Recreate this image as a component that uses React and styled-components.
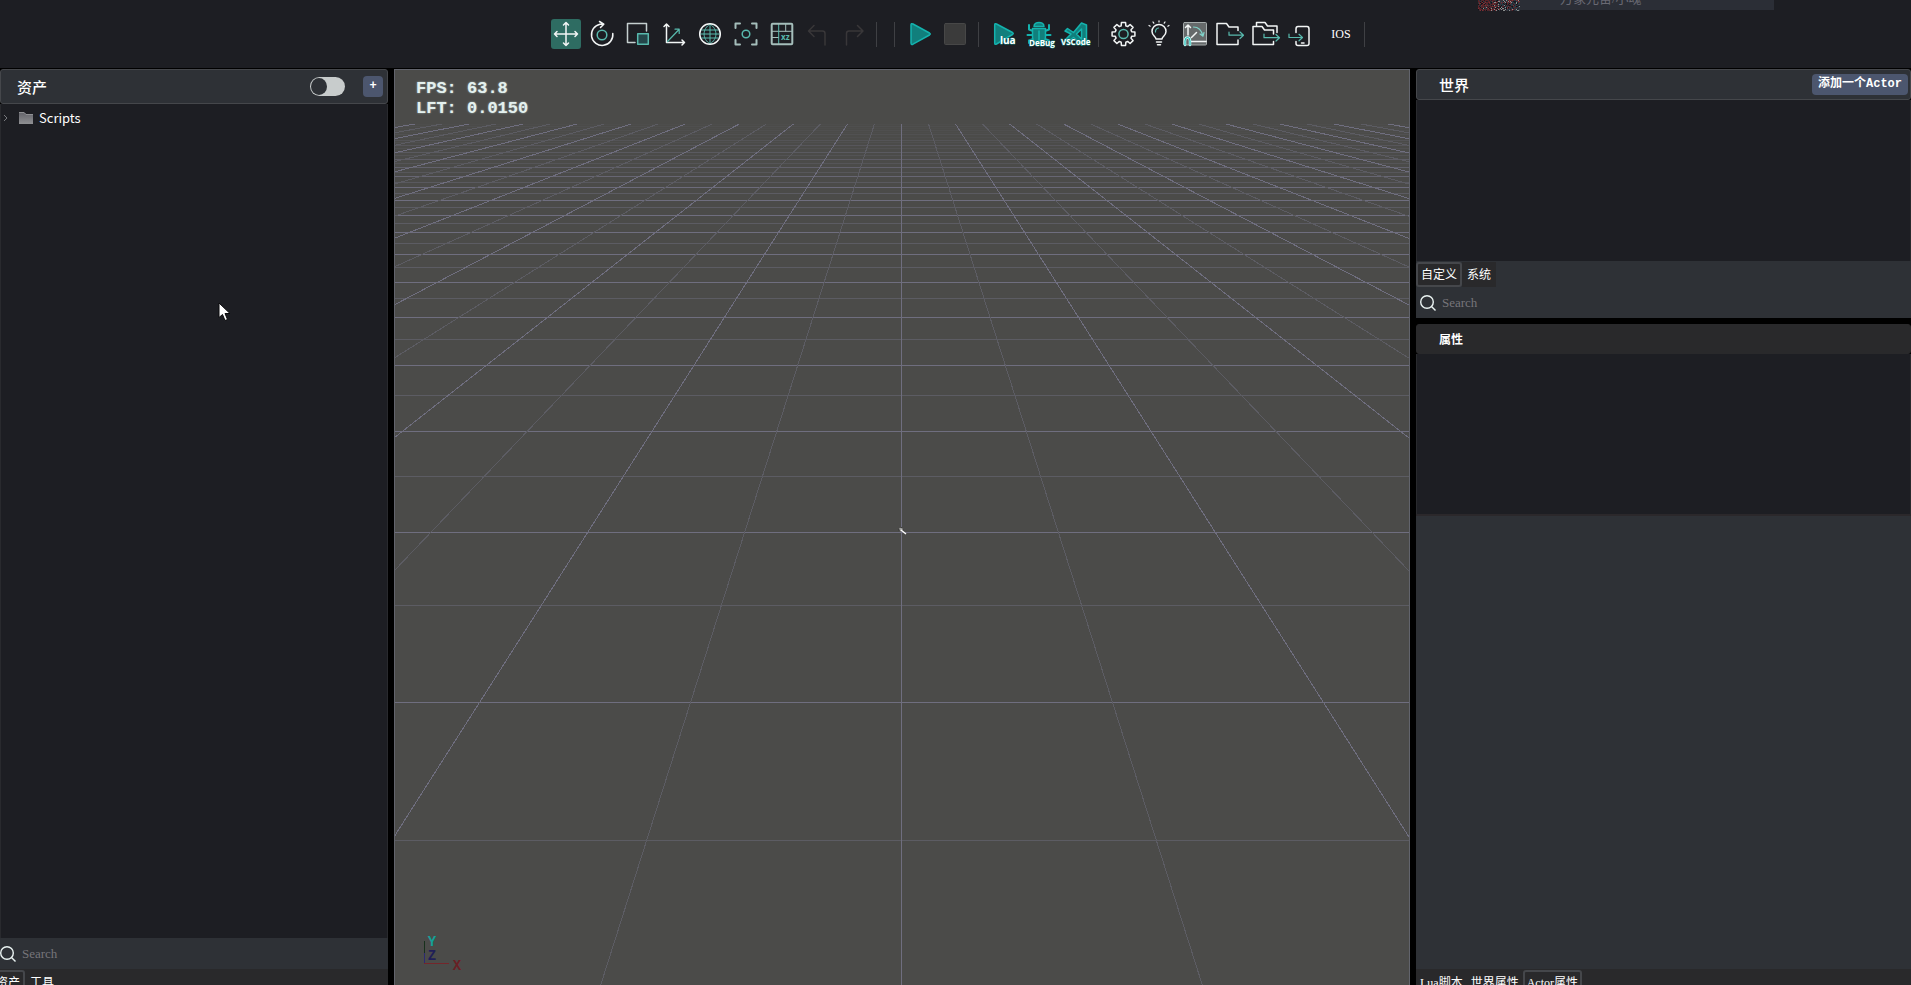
import { useState } from "react";
import styled, { createGlobalStyle, css } from "styled-components";

const GlobalStyle = createGlobalStyle`
  * {
    box-sizing: border-box;
  }

  body {
    margin: 0;
    background: #000;
    color: #fff;
    font-family: "Liberation Serif", "Noto Sans CJK SC", serif;
    font-size: 12px;
    overflow: hidden;
  }

  button,
  input {
    font: inherit;
    color: inherit;
  }
`;

const Page = styled.div`
  height: 100vh;
  display: flex;
  flex-direction: column;
  gap: 1px;
`;

const Toolbar = styled.header`
  position: relative;
  flex: 0 0 68px;
  display: flex;
  align-items: center;
  justify-content: center;
  padding-right: 6px;
  background: #1d1e23;
`;

const ToolGroup = styled.div`
  display: flex;
  align-items: center;
  gap: 6px;
  min-height: 25px;
  padding: 0 7px 0 10px;
  position: relative;

  &::after {
    content: "";
    position: absolute;
    right: -1px;
    top: 50%;
    width: 1px;
    height: 25px;
    margin-top: -12px;
    background: #3f4044;
  }

  & + & {
    margin-left: 1px;
  }
`;

const ToolButton = styled.button`
  width: ${(props) => (props.$wide ? 32 : 30)}px;
  height: 30px;
  padding: 0;
  border: 0;
  border-radius: 3px;
  background: ${(props) => (props.$active ? "#2e6c62" : "transparent")};
  text-align: center;

  svg {
    display: block;
    overflow: visible;
  }
`;

const UserCard = styled.div`
  position: absolute;
  top: 0;
  right: 137px;
  display: flex;
  width: 296px;
  height: 11px;
  overflow: hidden;
`;

const UserName = styled.div`
  flex: 1;
  height: 10px;
  padding-left: 40px;
  display: flex;
  align-items: flex-end;
  background: #2b2e36;
  color: #696973;
  font-size: 13px;
  line-height: 16px;
  padding-bottom: 3px;
`;

const Workspace = styled.main`
  flex: 1;
  min-height: 0;
  display: grid;
  grid-template-columns: 388px 1fr 495px;
  gap: 6px;
`;

const Column = styled.section`
  min-width: 0;
  min-height: 0;
  display: flex;
  flex-direction: column;
`;

const PanelHeader = styled.div`
  flex: 0 0 ${(props) => props.$height}px;
  display: flex;
  align-items: center;
  gap: 18px;
  padding: 0 ${(props) => (props.$tight ? 2 : 4)}px 0 ${(props) => props.$indent}px;
  border: 1px solid #45474b;
  border-radius: 3px;
  background: #2e3136;

  ${(props) =>
    props.$dark &&
    css`
      border-color: #29292b;
      background: #29292b;
    `}
`;

const PanelTitle = styled.h2`
  flex: 1;
  margin: 0;
  padding-top: 2px;
  font-size: ${(props) => (props.$small ? 12 : 15)}px;
  font-weight: ${(props) => (props.$small ? 700 : 500)};
  line-height: 20px;
`;

const PanelBody = styled.div`
  flex: ${(props) => (props.$height ? `0 0 ${props.$height}px` : "1")};
  min-height: 0;
  border-left: 1px solid #292a2e;
  border-right: 1px solid #292a2e;
  background: #1d1e23;
`;

const EmptyBody = styled.div`
  flex: 1;
  border-top: 2px solid #2b282b;
  background: #2e3136;
`;

const Switch = styled.input`
  appearance: none;
  width: 35px;
  height: 19px;
  margin: 0;
  padding: 1px;
  border-radius: 10px;
  background: #c8cccc;

  &::before {
    content: "";
    display: block;
    width: 16px;
    height: 17px;
    border-radius: 50%;
    background: #2e3136;
  }

  &:checked::before {
    margin-left: auto;
  }
`;

const ActionButton = styled.button`
  height: 21px;
  min-width: 20px;
  padding: 0 6px;
  border: 0;
  border-radius: 4px;
  background: #4c566e;
  font-family: "Liberation Mono", "Noto Sans CJK SC", monospace;
  font-weight: 700;
  line-height: 21px;
  white-space: nowrap;
`;

const TreeRow = styled.div`
  display: flex;
  align-items: center;
  height: 24px;
  margin-top: 2px;
  padding-left: 2px;
  font-family: "Noto Sans CJK SC", "Noto Sans", sans-serif;
  font-size: 13px;
  line-height: 20px;

  svg:first-child {
    margin-right: 10px;
  }

  svg + svg {
    margin-right: 6px;
  }
`;

const SearchBar = styled.label`
  flex: 0 0 31px;
  display: flex;
  align-items: center;
  gap: 6px;
  padding-left: ${(props) => props.$indent}px;
  background: #2e3136;
`;

const SearchInput = styled.input`
  flex: 1;
  min-width: 0;
  padding: 0;
  border: 0;
  outline: 0;
  background: transparent;
  font-size: 13px;

  &::placeholder {
    color: #77757a;
    opacity: 1;
  }
`;

const TabBar = styled.div`
  flex: 0 0 ${(props) => (props.$clipped ? 16 : 26)}px;
  display: flex;
  align-items: flex-start;
  overflow: hidden;
  padding-top: 1px;
  background: ${(props) => (props.$clipped ? "#29292b" : "#2e3136")};
`;

const Tab = styled.button`
  height: 25px;
  padding: 0 ${(props) => (props.$dense ? 2 : 3)}px;
  border: 2px solid ${(props) => (props.$active ? "#45474b" : "#29292b")};
  border-radius: ${(props) => (props.$active ? 3 : 0)}px;
  background: #29292b;
  line-height: 20px;
  white-space: nowrap;

  ${(props) =>
    props.$cut &&
    css`
      margin-left: -9px;
    `}
`;

const World = styled.div`
  display: flex;
  flex-direction: column;
  margin-bottom: 6px;
`;

const Viewport = styled.section`
  position: relative;
  min-width: 0;
  min-height: 0;
  border: 1px solid #62646c;
  border-bottom: 0;
  background: #4b4b49;
  overflow: hidden;
`;

const Scene = styled.svg`
  display: block;
  width: 100%;
  height: 100%;
`;

const Stats = styled.pre`
  position: absolute;
  top: 9px;
  left: 21px;
  margin: 0;
  color: #e4f1ef;
  font-family: "Liberation Mono", monospace;
  font-size: 17px;
  font-weight: 700;
  line-height: 20px;
  text-shadow: 0 0 2px #a9bcba;
`;

const Pointer = styled.svg`
  position: absolute;
  top: 302px;
  left: 218px;
  pointer-events: none;
`;

const TEAL = "#58b9ad";
const CYAN = "#14b3ae";
const DEEP = "#117f7c";

const Icon = ({ children, color = "#f2f5f5" }) => (
  <svg
    width="30"
    height="30"
    viewBox="0 0 30 30"
    fill="none"
    stroke={color}
    strokeWidth="1.5"
    strokeLinecap="round"
    strokeLinejoin="round"
  >
    {children}
  </svg>
);

const IconLabel = ({ x, y, children, size = 8 }) => (
  <text
    x={x}
    y={y}
    fill="#fff"
    stroke={DEEP}
    strokeWidth="1"
    paintOrder="stroke"
    fontFamily="Open Sans, sans-serif"
    fontSize={size}
    fontWeight="700"
  >
    {children}
  </text>
);

const gearPath = () => {
  const points = [];
  for (let i = 0; i < 8; i++) {
    const a = (i * Math.PI) / 4;
    [
      [-0.28, 8.5],
      [-0.18, 11.6],
      [0.18, 11.6],
      [0.28, 8.5],
    ].forEach(([d, r]) => {
      points.push(
        `${(14.5 + r * Math.sin(a + d)).toFixed(2)} ${(15 - r * Math.cos(a + d)).toFixed(2)}`
      );
    });
  }
  return `M${points.join("L")}Z`;
};

const groups = [
  [
    {
      name: "Move",
      active: true,
      icon: (
        <Icon>
          <path d="M15 3.5V26.5M3.5 15H26.5M12.5 6L15 3.5L17.5 6M12.5 24L15 26.5L17.5 24M6 12.5L3.5 15L6 17.5M24 12.5L26.5 15L24 17.5" />
        </Icon>
      ),
    },
    {
      name: "Rotate",
      icon: (
        <Icon>
          <path d="M16.5 5.2H13A10.7 10.7 0 1 0 25.8 14.5M12.5 2.5L16.8 5.2L13.5 8.5" />
          <circle cx="15" cy="16" r="4.8" stroke={TEAL} />
        </Icon>
      ),
    },
    {
      name: "Scale",
      icon: (
        <Icon>
          <path d="M12 23.5H4.5V4.5H23.5V12" stroke="#c5cfcf" />
          <rect x="14.7" y="14.7" width="10.6" height="10.6" stroke={TEAL} fill="#24464a" />
        </Icon>
      ),
    },
    {
      name: "Axis",
      icon: (
        <Icon>
          <path d="M7.5 5V23.5H25.5M5 7.5L7.5 5L10 7.5M23 21L25.5 23.5L23 26" />
          <path d="M8.5 22.5L20 10.5M16 10.2H20.2V14.5" stroke={TEAL} strokeWidth="1.2" />
        </Icon>
      ),
    },
    {
      name: "World space",
      icon: (
        <Icon>
          <path
            d="M15 5V25M5 15H25M6.5 11H23.5M6.5 19H23.5M15 5C7 10 7 20 15 25M15 5C23 10 23 20 15 25"
            stroke={TEAL}
            strokeWidth="1"
          />
          <circle cx="15" cy="15" r="10.3" />
        </Icon>
      ),
    },
    {
      name: "Focus",
      icon: (
        <Icon color="#a5bebb">
          <path d="M4.5 9V4.5H9M21 4.5H25.5V9M25.5 21V25.5H21M9 25.5H4.5V21" strokeWidth="2" />
          <circle cx="15" cy="15" r="3.8" stroke={TEAL} />
        </Icon>
      ),
    },
    {
      name: "Snap grid",
      icon: (
        <Icon color="#a5bebb">
          <path d="M5 12.3H25M18.7 5V12M5 18.5H11.5" strokeWidth="1" />
          <path d="M11.7 5V25" stroke={TEAL} strokeWidth="1" />
          <rect x="4.7" y="4.7" width="20.6" height="20.6" rx="1" strokeWidth="2" />
          <text x="14" y="20.5" fill={TEAL} stroke="none" fontSize="8" fontFamily="Open Sans, sans-serif" fontWeight="700">
            xz
          </text>
        </Icon>
      ),
    },
    {
      name: "Undo",
      icon: (
        <Icon color="#393739">
          <path d="M22 26V14.5Q22 12 19.5 12H6M11 6.5L5.5 12L11 17.5" />
        </Icon>
      ),
    },
    {
      name: "Redo",
      icon: (
        <Icon color="#393739">
          <path d="M7.5 26V14.5Q7.5 12 10 12H23.5M18.5 6.5L24 12L18.5 17.5" />
        </Icon>
      ),
    },
  ],
  [],
  [
    {
      name: "Play",
      icon: (
        <Icon color={CYAN}>
          <path d="M6 6Q6 4 8 5L24.5 14Q26 15 24.5 16L8 25.2Q6 26 6 24Z" fill={DEEP} />
        </Icon>
      ),
    },
    {
      name: "Stop",
      icon: (
        <Icon color="#474747">
          <rect x="3.5" y="4.5" width="21" height="21" rx="1" fill="#3b3b3b" strokeWidth="1" />
        </Icon>
      ),
    },
  ],
  [
    {
      name: "Run Lua",
      icon: (
        <Icon color={CYAN}>
          <path d="M5.7 6Q5.7 4 7.5 5L23.5 13.5Q25 14.5 23.5 15.5L7.5 25Q5.7 26 5.7 24Z" fill={DEEP} />
          <IconLabel x="11" y="25" size={10}>
            lua
          </IconLabel>
        </Icon>
      ),
    },
    {
      name: "Debug",
      icon: (
        <Icon color={CYAN}>
          <path d="M8 12L4 10.5V6M20 12L24 10.5V6M7 16H2.5M21 16H25.5M8 20L4 21.5V24M20 20L24 21.5V24" strokeWidth="2" />
          <path d="M9 7.5C9 2 19 2 19 7.5Z" fill={DEEP} />
          <path d="M7.5 9.5H20.5V18C20.5 28 7.5 28 7.5 18Z" fill={DEEP} />
          <path d="M14 12V23" />
          <IconLabel x="4" y="27">
            DeBug
          </IconLabel>
        </Icon>
      ),
    },
    {
      name: "Open VSCode",
      icon: (
        <Icon color={CYAN}>
          <path
            d="M20.5 4L25.5 6V24L20.5 26L12.5 18.5L7 22.5L4 21L10 15L4 12L6.5 9.5L12.5 13.5ZM20.5 10L15.5 15L20.5 20Z"
            fill={DEEP}
            fillRule="evenodd"
          />
          <IconLabel x="0" y="26">
            VSCode
          </IconLabel>
        </Icon>
      ),
    },
  ],
  [
    {
      name: "Settings",
      icon: (
        <Icon>
          <path d={gearPath()} />
          <circle cx="14.5" cy="15" r="4.6" stroke={TEAL} />
        </Icon>
      ),
    },
    {
      name: "Light",
      icon: (
        <Icon>
          <path d="M11 20C11 17.5 7 16.5 7 12.5A7 7 0 0 1 21 12.5C21 16.5 17 17.5 17 20ZM11.5 23H16.5M12.5 25.8H15.5" />
          <path d="M14 1.8V3M8 3L8.8 4.2M20 3L19.2 4.2M4 6.5L5.2 7.2M24 6.5L22.8 7.2" strokeWidth="1.2" />
          <path d="M10.5 13A3.5 3.5 0 0 1 13.5 9" stroke={TEAL} strokeWidth="1.2" />
        </Icon>
      ),
    },
    {
      name: "Terrain",
      icon: (
        <Icon>
          <rect x="2.5" y="3.5" width="23" height="22.5" rx="1" fill="#666a6b" stroke="#a6acac" strokeWidth="1" />
          <path d="M7 16V6M4.5 8.5L7 6L9.5 8.5M10.5 18.5L15.5 13.5M10 22.5H25" />
          <path d="M12.5 8C17 8 20.5 11 22 17M19 15L22 17.2L23 13.5" stroke="#7fd3ca" strokeWidth="1.2" />
          <path d="M4 26V22Q4 18.5 6.5 18.5T9 22V26" stroke="#c9fffa" strokeWidth="2.5" />
          <path d="M4 26V22Q4 18.5 6.5 18.5T9 22V26" stroke={CYAN} strokeWidth="1" />
        </Icon>
      ),
    },
    {
      name: "Export",
      icon: (
        <Icon>
          <path d="M21 11.5V8H12L9.5 4.5H0V25.5H21V21" />
          <path d="M12 13V16.2H26.5M23 13L26.5 16.2L23 19.5" stroke={TEAL} strokeWidth="1.2" />
        </Icon>
      ),
    },
    {
      name: "Export all",
      icon: (
        <Icon>
          <path d="M20.5 15V11H11.5L9 7.5H0V25.5H20.5V22.5M3.5 7V3.5H12L14.5 7H24V13.5" />
          <path d="M11 15V18.7H26.5M23 15.5L26.5 18.7L23 22" stroke={TEAL} strokeWidth="1.2" />
        </Icon>
      ),
    },
    {
      name: "Send to phone",
      icon: (
        <Icon>
          <path d="M7 13.5V10Q7 7.5 9 7.5H18Q20 7.5 20 10V24.5Q20 26.5 18 26.5H9Q7 26.5 7 24.5V22.5M12.5 24H15" />
          <path d="M0 15V18.5H13.5M10 15.3L13.5 18.5L10 21.8" stroke={TEAL} strokeWidth="1.2" />
        </Icon>
      ),
    },
    { name: "IOS", wide: true, icon: "IOS" },
  ],
];

const SearchIcon = () => (
  <svg width="16" height="16" viewBox="0 0 16 16" fill="none" stroke="#eaf3f2" strokeWidth="1.4">
    <circle cx="7" cy="7" r="6.3" />
    <path d="M11.5 11.5L15.5 15.5" />
  </svg>
);

// speckled avatar thumbnail
const Avatar = () => {
  const colors = ["#1a1b22", "#5a2328", "#23242c", "#7a3136", "#111216", "#3b3036", "#8b8f8f", "#2c3a44"];
  const dots = [];
  let seed = 7;
  for (let y = 0; y < 11; y++) {
    for (let x = 0; x < 42; x++) {
      seed = (seed * 16807) % 2147483647;
      const n = seed % 12;
      const color = n > 7 ? colors[x < 20 ? 1 : 7] : colors[n];
      dots.push(<rect key={`${x}-${y}`} x={x} y={y} width="1" height="1" fill={color} />);
    }
  }
  return (
    <svg width="42" height="11" viewBox="0 0 42 11" shapeRendering="crispEdges">
      {dots}
    </svg>
  );
};

const HORIZON = 39;
const CENTER = 901.5;

// ground plane, every second line is a major one
const Ground = () => {
  const rows = Array.from({ length: 41 }, (_, i) => ({
    major: i % 2 === 1,
    y: Math.floor(37.8 + 1934 / (2.408 + i * 0.5)) + 0.5,
  })).filter(({ y }) => y > 124);
  const cols = Array.from({ length: 39 }, (_, i) => i - 19);
  const stroke = (major) => (major ? "#6f6e7f" : "#5c5c63");

  return (
    <g shapeRendering="crispEdges" strokeWidth="1">
      {rows.map(({ major, y }, i) => (
        <path
          key={i}
          d={`M-600 ${y}H2500`}
          stroke={stroke(major)}
          opacity={Math.max(0.12, Math.min(1, (y - 122) / 70))}
        />
      ))}
      {cols.map((k) => (
        <path
          key={k}
          d={`M${CENTER + k * 0.318 * (124 - HORIZON)} 124L${CENTER + k * 0.318 * (1400 - HORIZON)} 1400`}
          stroke={stroke(k % 2 === 0)}
        />
      ))}
    </g>
  );
};

function App() {
  const [flat, setFlat] = useState(false);
  const [assetQuery, setAssetQuery] = useState("");
  const [actorQuery, setActorQuery] = useState("");

  return (
    <Page>
      <GlobalStyle />
      <Toolbar>
        {groups.map((tools, i) => (
          <ToolGroup key={i}>
            {tools.map((tool) => (
              <ToolButton
                key={tool.name}
                type="button"
                aria-label={tool.name}
                $active={tool.active}
                $wide={tool.wide}
              >
                {tool.icon}
              </ToolButton>
            ))}
          </ToolGroup>
        ))}
        <UserCard>
          <Avatar />
          <UserName>万象元宙/小魂</UserName>
        </UserCard>
      </Toolbar>

      <Workspace>
        <Column>
          <PanelHeader $height={35} $indent={16}>
            <PanelTitle>资产</PanelTitle>
            <Switch
              type="checkbox"
              aria-label="资产"
              checked={flat}
              onChange={(e) => setFlat(e.target.checked)}
            />
            <ActionButton type="button">+</ActionButton>
          </PanelHeader>
          <PanelBody>
            <TreeRow>
              <svg width="6" height="8" viewBox="0 0 6 8" fill="none" stroke="#77797d">
                <path d="M1 1L4 4L1 7" />
              </svg>
              <svg width="14" height="14" viewBox="0 0 14 14">
                <defs>
                  <linearGradient id="folder" x1="0" y1="0" x2="0" y2="1">
                    <stop offset="0" stopColor="#626269" />
                    <stop offset="1" stopColor="#8f9093" />
                  </linearGradient>
                </defs>
                <path d="M0 1H5L7 3H14V13H0Z" fill="url(#folder)" />
                <path d="M0 1.5H5L7 3.5H14" fill="none" stroke="#8f9093" />
              </svg>
              Scripts
            </TreeRow>
          </PanelBody>
          <SearchBar $indent={0}>
            <SearchIcon />
            <SearchInput
              aria-label="Search"
              placeholder="Search"
              value={assetQuery}
              onChange={(e) => setAssetQuery(e.target.value)}
            />
          </SearchBar>
          <TabBar $clipped>
            <Tab type="button" $active $cut>
              资产
            </Tab>
            <Tab type="button">工具</Tab>
          </TabBar>
        </Column>

        <Viewport>
          <Scene viewBox="395 70 1014 915" preserveAspectRatio="xMidYMin slice">
            <Ground />
            <circle cx="901" cy="529.5" r="2" fill="#a5a5a3" stroke="#2c2c2b" strokeDasharray="2 2" />
            <path d="M901 530L906 534" stroke="#fff" strokeWidth="1.5" />
            <path d="M424.5 941V953" stroke="#17301c" />
            <path d="M424.5 953V963" stroke="#2c2a72" />
            <path d="M424 963.5H449" stroke="#74262b" />
            <g fontFamily="Liberation Mono, monospace" fontSize="14" fontWeight="700" textAnchor="middle">
              <text x="432" y="946" fill="#14a098">Y</text>
              <text x="432" y="960" fill="#201f58">Z</text>
              <text x="457" y="970" fill="#6a1f24">X</text>
            </g>
          </Scene>
          <Stats>{"FPS: 63.8\nLFT: 0.0150"}</Stats>
        </Viewport>

        <Column>
          <World>
            <PanelHeader $height={31} $indent={22} $tight>
              <PanelTitle>世界</PanelTitle>
              <ActionButton type="button">添加一个Actor</ActionButton>
            </PanelHeader>
            <PanelBody $height={161} />
            <TabBar>
              <Tab type="button" $active>
                自定义
              </Tab>
              <Tab type="button">系统</Tab>
            </TabBar>
            <SearchBar $indent={4}>
              <SearchIcon />
              <SearchInput
                aria-label="Search"
                placeholder="Search"
                value={actorQuery}
                onChange={(e) => setActorQuery(e.target.value)}
              />
            </SearchBar>
          </World>
          <PanelHeader $height={30} $indent={22} $dark>
            <PanelTitle $small>属性</PanelTitle>
          </PanelHeader>
          <PanelBody $height={160} />
          <EmptyBody />
          <TabBar $clipped>
            <Tab type="button" $dense>
              Lua脚本
            </Tab>
            <Tab type="button" $dense>
              世界属性
            </Tab>
            <Tab type="button" $dense $active>
              Actor属性
            </Tab>
          </TabBar>
        </Column>
      </Workspace>

      <Pointer width="14" height="20" viewBox="0 0 14 20">
        <path
          d="M1 1V15.5L4.5 12.5L7 18.5L9.5 17.5L7 11.5H12Z"
          fill="#fff"
          stroke="#0b0b0d"
        />
      </Pointer>
    </Page>
  );
}

export default App;
